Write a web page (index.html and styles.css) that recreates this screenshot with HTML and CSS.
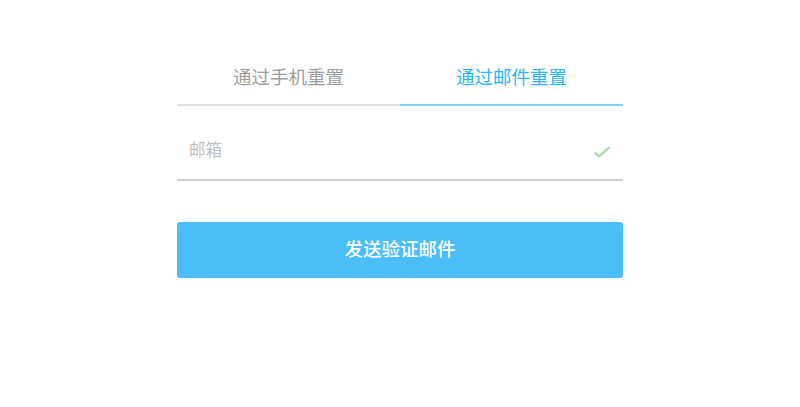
FILE: index.html
```html
<!DOCTYPE html>
<html lang="zh-CN">
<head>
  <meta charset="UTF-8">
  <meta name="viewport" content="width=device-width, initial-scale=1.0">
  <title>重置密码</title>
  <link rel="stylesheet" href="styles.css">
</head>
<body>
  <div class="reset">
    <div class="tabs">
      <div class="tab">通过手机重置</div>
      <div class="tab active">通过邮件重置</div>
    </div>

    <div class="field">
      <span class="placeholder">邮箱</span>
      <svg class="check" width="18" height="14" viewBox="0 0 18 14">
        <path d="M1.5 7.5 L6 11.5 L16.5 2" fill="none" stroke="#a5d6a7" stroke-width="2.2"/>
      </svg>
    </div>

    <button class="submit">发送验证邮件</button>
  </div>
</body>
</html>
```

FILE: styles.css
```css
body {
  margin: 0;
  background: #fff;
  font-family: "Noto Sans CJK SC", "Noto Sans", sans-serif;
}

.reset {
  width: 446px;
  margin: 0 auto;
  padding-top: 58px;
}

.tabs {
  display: flex;
}

.tab {
  flex: 1;
  text-align: center;
  font-size: 18.5px;
  line-height: 36px;
  padding-bottom: 10px;
  color: #9e9e9e;
  border-bottom: 2px solid #e3e3e3;
}

.tab.active {
  color: #29b6f6;
  border-bottom-color: #81d4fa;
}

.field {
  box-sizing: border-box;
  display: flex;
  align-items: flex-start;
  justify-content: space-between;
  height: 75px;
  padding: 34px 12px 0;
  border-bottom: 2px solid #cfcfcf;
}

.placeholder {
  font-size: 16.5px;
  line-height: 18px;
  color: #bdbdbd;
}

.check {
  margin-top: 5px;
}

.submit {
  display: block;
  width: 100%;
  height: 56px;
  margin-top: 41px;
  padding-bottom: 5px;
  border: none;
  border-radius: 3px;
  background: #4bbef7;
  color: #fff;
  font-family: inherit;
  font-size: 18.5px;
  font-weight: 500;
}
```
